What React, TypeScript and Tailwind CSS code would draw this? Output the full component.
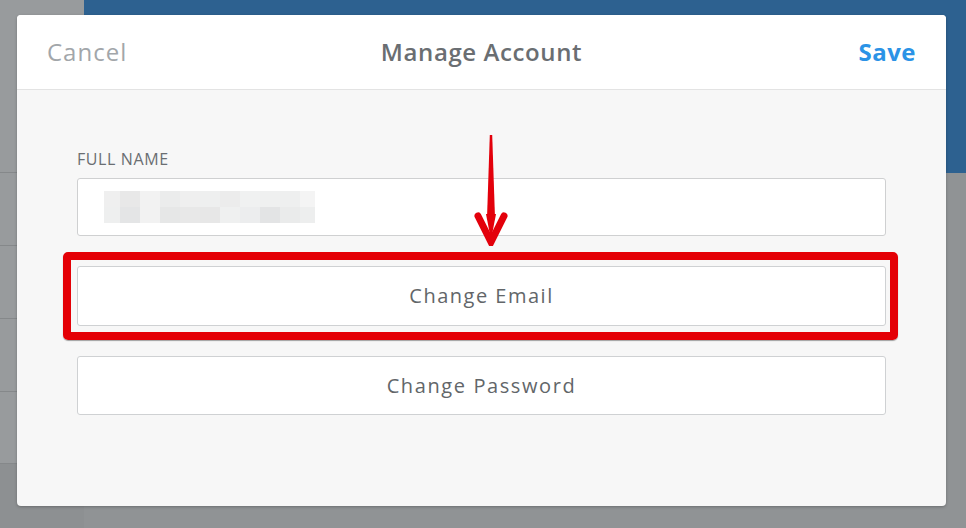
const blur = [
  ['#efefef', '#e8e8e8', '#f2f2f2', '#ebecec', '#efefef', '#eeefef', '#ececec', '#f0f1f1', '#eff0f0', '#eeefef', '#f4f4f4'],
  ['#eeefef', '#e4e5e6', '#f2f2f2', '#e6e7e7', '#e8e8e8', '#e7e7e7', '#eff0f0', '#ecedee', '#e3e4e5', '#eaebeb', '#edeeee'],
];
const blurWidths = [16, 20, 20, 20, 20, 20, 20, 20, 20, 20, 15];

function Arrow() {
  return (
    <svg
      className="absolute left-[472px] top-[132px]"
      width="38"
      height="114"
      viewBox="0 0 38 114"
      aria-hidden
    >
      <path d="M17.8 3 L20.2 3 L23 86 L15 86 Z" fill="#e3000b" />
      <path
        d="M6 84 L19 110 L32 84"
        fill="none"
        stroke="#e3000b"
        strokeWidth="7"
        strokeLinecap="round"
        strokeLinejoin="miter"
      />
      <path d="M14 82 L19 108 L24 82 Z" fill="#e3000b" />
    </svg>
  );
}

export default function App() {
  return (
    <div
      className="relative h-[528px] w-full overflow-hidden bg-[#909395]"
      style={{ fontFamily: '"Open Sans", "Liberation Sans", sans-serif' }}
    >
      {/* page behind the overlay */}
      <div className="flex h-full">
        <div className="flex w-[84px] flex-col bg-[#989b9d]">
          <div className="h-[172px]" />
          <div className="h-[73px] border-t border-[#85888a]" />
          <div className="h-[73px] border-t border-[#85888a]" />
          <div className="h-[73px] border-t border-[#85888a]" />
          <div className="h-[72px] border-t border-[#85888a]" />
          <div className="flex-1 border-t border-[#85888a] bg-[#8d9092]" />
        </div>
        <div className="flex flex-1 flex-col">
          <div className="h-[173px] bg-[#2d6190]" />
          <div className="flex-1 bg-[#909395]" />
        </div>
      </div>

      {/* modal */}
      <div className="absolute left-[17px] top-[15px] flex h-[491px] w-[929px] flex-col overflow-hidden rounded-[4px] bg-[#f7f7f7] shadow-[0_1px_3px_rgba(0,0,0,0.25)]">
        <div className="grid h-[75px] grid-cols-[1fr_auto_1fr] items-center border-b border-[#e3e3e3] bg-white px-[30px] text-[24px]">
          <span className="tracking-[1px] text-[#a2a6aa]">Cancel</span>
          <span className="font-semibold tracking-[0.6px] text-[#6a6e72]">Manage Account</span>
          <span className="text-right font-bold tracking-[0.5px] text-[#2b93e6]">Save</span>
        </div>

        <div className="flex flex-col px-[60px] pt-[60px]">
          <label className="text-[16px] leading-[18px] tracking-[0.6px] text-[#6a6e72]">FULL NAME</label>
          <div className="mt-[10px] flex h-[58px] items-center rounded-[3px] border border-[#cfd0d1] bg-white pl-[26px]">
            <div className="flex flex-col">
              {blur.map((row, r) => (
                <div key={r} className="flex h-[16px]">
                  {row.map((c, i) => (
                    <div key={i} style={{ width: blurWidths[i], background: c }} />
                  ))}
                </div>
              ))}
            </div>
          </div>

          <div className="-ml-[14px] -mr-[12px] mt-[16px] rounded-[5px] border-[8px] border-[#e40006] py-[6px] pl-[6px] pr-[4px] shadow-[0_1px_1px_rgba(0,0,0,0.35)]">
            <div className="flex h-[60px] items-center justify-center rounded-[3px] border border-[#cfd1d3] bg-white text-[20px] tracking-[1.5px] text-[#626669]">
              Change Email
            </div>
          </div>

          <div className="mt-[16px] flex h-[59px] items-center justify-center rounded-[3px] border border-[#cfd1d3] bg-white text-[20px] tracking-[1.6px] text-[#626669]">
            Change Password
          </div>
        </div>
      </div>

      <Arrow />
    </div>
  );
}
